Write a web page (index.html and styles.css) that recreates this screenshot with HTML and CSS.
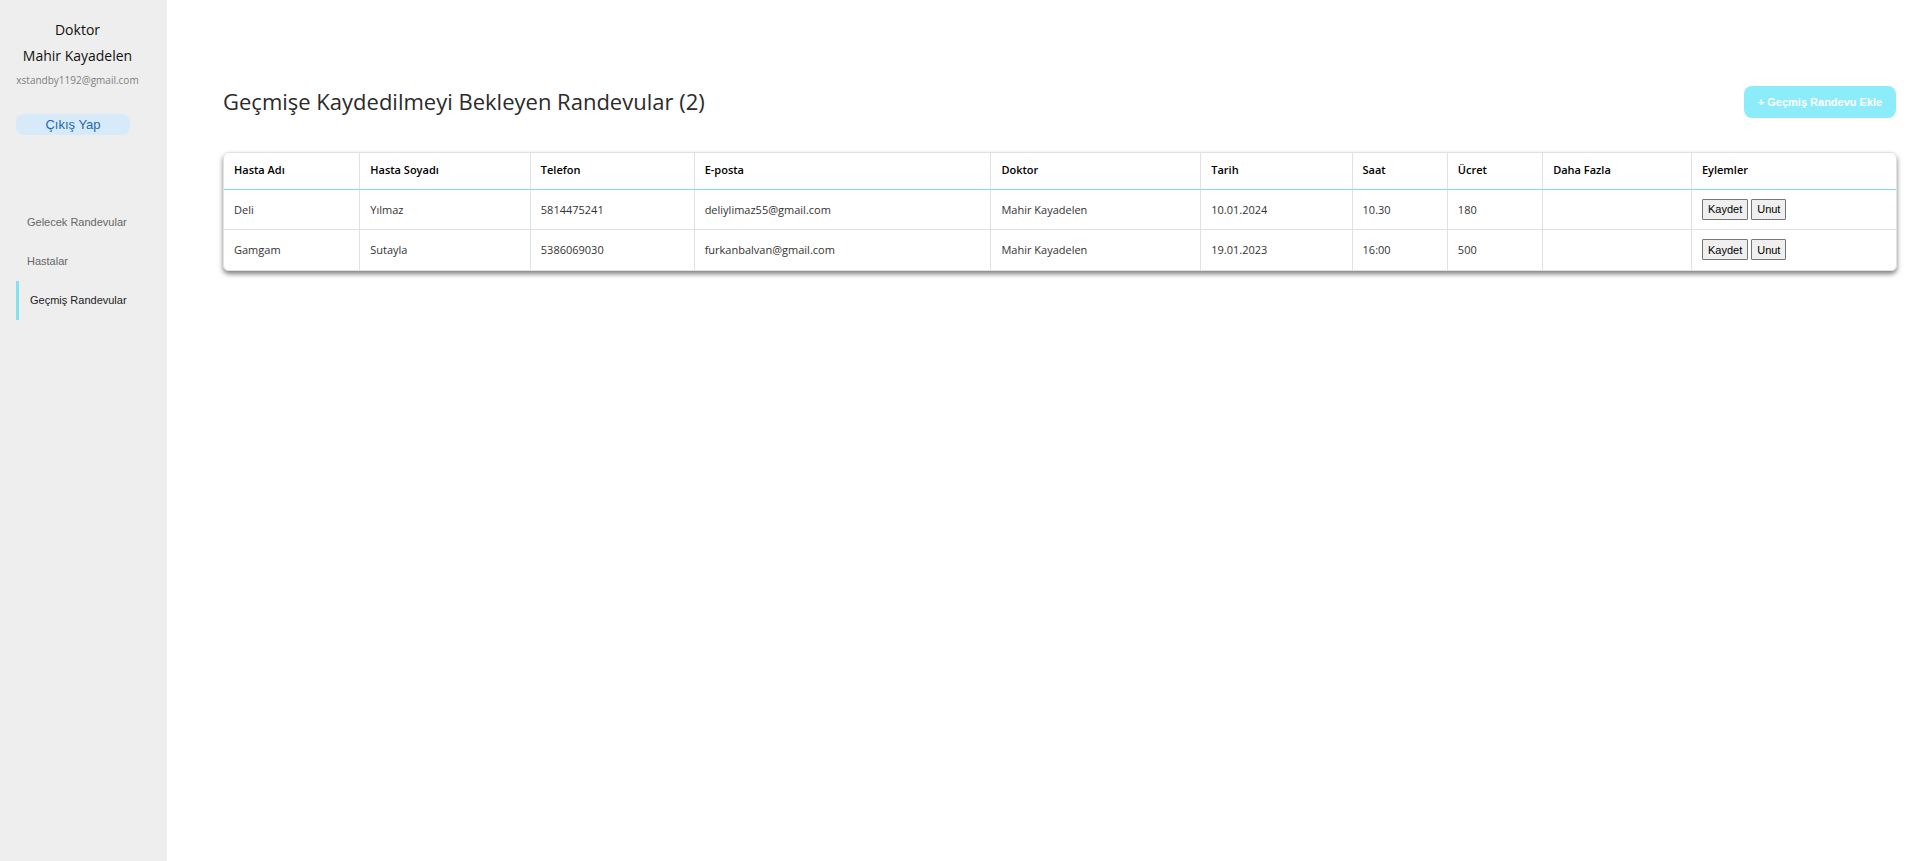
FILE: index.html
```html
<!DOCTYPE html>
<html lang="tr">
<head>
<meta charset="utf-8">
<title>Geçmiş Randevular</title>
<link rel="stylesheet" href="styles.css">
</head>
<body>
<div class="layout">
  <aside class="sidebar">
    <div class="profile">
      <p class="profile-name">Doktor</p>
      <p class="profile-name">Mahir Kayadelen</p>
      <p class="profile-mail">xstandby1192@gmail.com</p>
    </div>
    <button type="button" class="logout">Çıkış Yap</button>
    <nav class="menu">
      <a href="#gelecek" class="menu-link">Gelecek Randevular</a>
      <a href="#hastalar" class="menu-link">Hastalar</a>
      <a href="#gecmis" class="menu-link active" aria-current="page">Geçmiş Randevular</a>
    </nav>
  </aside>
  <main class="content">
    <header class="content-head">
      <h1 class="title">Geçmişe Kaydedilmeyi Bekleyen Randevular (2)</h1>
      <button type="button" class="add">+ Geçmiş Randevu Ekle</button>
    </header>
    <div class="card">
      <table class="table">
        <colgroup>
          <col class="c-name"><col class="c-surname"><col class="c-phone"><col class="c-mail"><col class="c-doctor"><col class="c-date"><col class="c-time"><col class="c-fee"><col class="c-more"><col class="c-actions">
        </colgroup>
        <thead>
          <tr><th>Hasta Adı</th><th>Hasta Soyadı</th><th>Telefon</th><th>E-posta</th><th>Doktor</th><th>Tarih</th><th>Saat</th><th>Ücret</th><th>Daha Fazla</th><th>Eylemler</th></tr>
        </thead>
        <tbody>
          <tr><td>Deli</td><td>Yılmaz</td><td>5814475241</td><td>deliylimaz55@gmail.com</td><td>Mahir Kayadelen</td><td>10.01.2024</td><td>10.30</td><td>180</td><td></td><td><div class="actions"><button type="button" class="act">Kaydet</button><button type="button" class="act">Unut</button></div></td></tr>
          <tr><td>Gamgam</td><td>Sutayla</td><td>5386069030</td><td>furkanbalvan@gmail.com</td><td>Mahir Kayadelen</td><td>19.01.2023</td><td>16:00</td><td>500</td><td></td><td><div class="actions"><button type="button" class="act">Kaydet</button><button type="button" class="act">Unut</button></div></td></tr>
        </tbody>
      </table>
    </div>
  </main>
</div>
</body>
</html>
```
FILE: styles.css
```css
* { box-sizing: border-box; }
body {
  margin: 0;
  background: #fff;
  color: #212529;
  font-family: "Open Sans", sans-serif;
}
p, h1 { margin: 0; }
button { font-family: "Liberation Sans", Arial, sans-serif; cursor: pointer; }

.layout { display: flex; min-height: 100vh; }

.sidebar {
  flex: none;
  width: 167px;
  padding: 17px 16px;
  background: #eee;
}
.profile {
  display: flex;
  flex-direction: column;
  align-items: center;
  width: 123px;
  white-space: nowrap;
}
.profile-name { font-size: 14px; line-height: 26px; color: #111; }
.profile-mail { font-size: 10px; line-height: 22px; color: #808080; }
.logout {
  display: block;
  width: 114px;
  height: 21px;
  margin-top: 23px;
  padding: 0;
  border: 0;
  border-radius: 8px;
  background: #d7eafa;
  color: #1f68ac;
  font-size: 13px;
}
.menu { margin-top: 68px; }
.menu-link {
  display: block;
  padding-left: 11px;
  font: 11px/39px "Liberation Sans", Arial, sans-serif;
  color: #666;
  text-decoration: none;
  white-space: nowrap;
}
.menu-link.active { border-left: 3px solid #81e3f1; color: #222; }

.content { flex: 1; min-width: 0; padding: 86px 22px 0 56px; }
.content-head {
  display: flex;
  justify-content: space-between;
  align-items: flex-start;
  height: 32px;
  padding-right: 1px;
}
.title { font-size: 22px; font-weight: 400; line-height: 30px; color: #2b2b2b; }
.add {
  width: 152px;
  height: 32px;
  padding: 0;
  border: 0;
  border-radius: 8px;
  background: #8cecfa;
  color: #fff;
  font-size: 11px;
  font-weight: 700;
}

.card {
  margin-top: 34px;
  border: 1px solid #dee2e6;
  border-radius: 6px;
  box-shadow: 0 3px 5px rgba(0, 0, 0, 0.5);
  overflow: hidden;
}
.table {
  width: 100%;
  table-layout: fixed;
  border-collapse: separate;
  border-spacing: 0;
  font-size: 11px;
}
.table th, .table td {
  padding: 0 10px;
  text-align: left;
  vertical-align: middle;
  border-right: 1px solid #dee2e6;
}
.table th:last-child, .table td:last-child { border-right: 0; }
.table th { height: 37px; padding-bottom: 3px; font-weight: 600; color: #000; border-bottom: 1px solid #7edbe8; }
.table td { height: 40px; padding-bottom: 1px; font-weight: 400; color: #333; }
.table tbody tr:first-child td { border-bottom: 1px solid #dee2e6; }

.c-name { width: 8.15%; }
.c-surname { width: 10.2%; }
.c-phone { width: 9.8%; }
.c-mail { width: 17.75%; }
.c-doctor { width: 12.55%; }
.c-date { width: 9.05%; }
.c-time { width: 5.7%; }
.c-fee { width: 5.7%; }
.c-more { width: 8.9%; }

.actions { display: flex; gap: 3px; }
.act {
  height: 21px;
  padding: 0 5px;
  border: 1px solid #767676;
  border-radius: 1px;
  background: #efefef;
  color: #000;
  font-size: 11px;
}
```
